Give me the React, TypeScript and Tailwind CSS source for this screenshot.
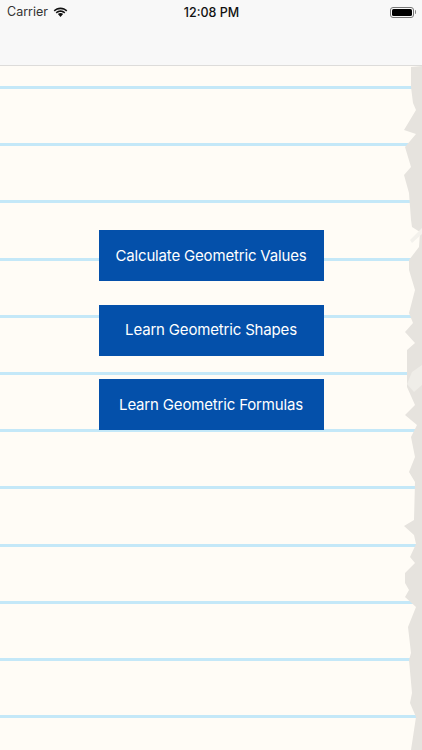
const tear =
  "422,66 411,67 411,87 413,103 416,110 404,130 416,134 405,147 411,167 404,175 409,193 411,220 412,227 420,232 419,247 409,260 409,270 415,290 409,313 413,323 405,332 415,343 407,350 407,387 415,405 405,415 417,425 411,437 415,457 409,472 415,482 414,520 404,526 414,535 416,544 410,557 415,563 405,573 405,583 409,590 405,597 416,607 408,627 411,653 409,660 412,693 410,703 416,717 411,750 422,750";

const buttons = ["Calculate Geometric Values", "Learn Geometric Shapes", "Learn Geometric Formulas"];

export default function App() {
  return (
    <div className="w-[422px] h-[750px] flex flex-col overflow-hidden bg-[#fffcf6] font-['Inter','Liberation_Sans',sans-serif]">
      <header className="h-[66px] shrink-0 bg-[#f8f8f8] border-b border-[#dddcda]">
        <div className="h-[21px] pt-[3px] relative flex items-center justify-between pl-[7px] pr-[6px] text-[12.5px] text-[#111]">
          <div className="flex items-center gap-[5px]">
            <span className="text-[#333]">Carrier</span>
            <svg width="15" height="11" viewBox="0 0 15 11" fill="#111">
              <path d="M7.5 2.2c2.2 0 4.2.9 5.7 2.3l1.1-1.2C12.5 1.600 10.100.5 7.500.5S2.500 1.600.7 3.300l1.100 1.200C3.300 3.100 5.300 2.200 7.500 2.200z" />
              <path d="M7.500 5c1.400 0 2.700.5 3.700 1.500l1.100-1.200C11 4 9.300 3.300 7.500 3.300S4 4 2.700 5.300l1.100 1.200C4.800 5.500 6.100 5 7.500 5z" />
              <path d="M7.500 6.100c-1 0-1.900.4-2.600 1l2.600 3 2.600-3c-.7-.6-1.600-1-2.600-1z" />
            </svg>
          </div>
          <span className="absolute left-[1px] right-0 pt-[3px] text-center font-medium">12:08 PM</span>
          <div className="flex items-center">
            <div className="w-[24px] h-[11px] rounded-[3px] border border-[#777] p-[1px]">
              <div className="w-full h-full rounded-[1.5px] bg-black" />
            </div>
            <div className="w-[1.500px] h-[4px] ml-[0.500px] rounded-r-full bg-[#888]" />
          </div>
        </div>
      </header>

      <main className="relative flex-1">
        <div className="absolute inset-0 pt-[20px] blur-[0.4px]">
          {Array.from({ length: 12 }).map((_, i) => (
            <div key={i} className="h-[57.2px] flex items-start">
              <div className="w-full h-[3px] bg-[#c4e8f8]" />
            </div>
          ))}
        </div>

        <svg className="absolute left-0 top-[-66px] blur-[0.4px]" width="422" height="750" viewBox="0 0 422 750">
          <polygon points={tear} fill="#e6e3de" />
          <polygon points="422,228 410,240 412,243 422,234" fill="#f3f1ec" />
          <polygon points="422,365 412,372 407,384 414,392 422,385" fill="#efede8" />
        </svg>

        <div className="relative flex flex-col items-center pt-[164px]">
          {buttons.map((label) => (
            <button
              key={label}
              className="w-[225px] h-[51px] mb-[23.500px] pt-[1px] flex items-center justify-center bg-[#0450aa] text-white text-[15px] tracking-[-0.17px]"
            >
              {label}
            </button>
          ))}
        </div>
      </main>
    </div>
  );
}
